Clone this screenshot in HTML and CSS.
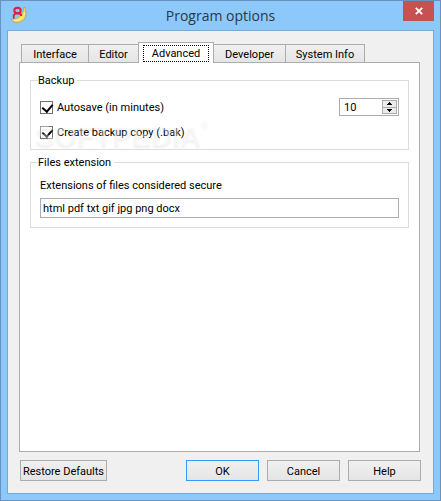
FILE: index.html
```html
<!DOCTYPE html>
<html lang="en">
<head>
<meta charset="utf-8">
<meta name="viewport" content="width=device-width, initial-scale=1">
<title>Program options</title>
<link rel="stylesheet" href="styles.css">
</head>
<body>
<div class="window">
	<header class="titlebar">
		<svg class="app-icon" width="18" height="18" viewBox="0 0 18 18">
			<path d="M1 13C6 13.500 11 11 13.500 4.500L13.600 1.500L15 1.500L15.500 4.500C17.500 10 14 16 8 16.400C4.500 16.600 2 15.500 1 13Z" fill="#f3dc5a" stroke="#a99245" stroke-width=".6"/>
			<ellipse cx="7.500" cy="4.500" rx="3.200" ry="2.700" fill="#8cc8fa" stroke="#dc1f3c" stroke-width="2"/>
			<path d="M4 12.500C2.500 9.500 4.500 7.300 7.500 7.300C10 7.300 11.500 8.300 11.300 10" fill="none" stroke="#dc1f3c" stroke-width="2"/>
			<path d="M4 14.500C9 15 13.500 12 14.700 7" fill="none" stroke="#fff2a0" stroke-width="1"/>
		</svg>
		<h1>Program options</h1>
		<button class="close" type="button" aria-label="Close">
			<svg width="8" height="8" viewBox="0 0 8 8"><path d="M.8 .8L7.200 7.200M7.200 .8L.8 7.200" stroke="#fff" stroke-width="1.800"/></svg>
		</button>
	</header>

	<form class="content">
		<div class="tabs" role="tablist">
			<button type="button" class="tab interface" role="tab">Interface</button>
			<button type="button" class="tab editor" role="tab">Editor</button>
			<button type="button" class="tab active" role="tab" aria-selected="true"><span>Advanced</span></button>
			<button type="button" class="tab developer" role="tab">Developer</button>
			<button type="button" class="tab system" role="tab">System Info</button>
		</div>

		<div class="panel" role="tabpanel">
			<fieldset class="backup">
				<legend>Backup</legend>
				<div class="row">
					<label class="check"><input type="checkbox" checked>Autosave (in minutes)</label>
					<div class="spin">
						<input type="text" value="10" aria-label="Minutes">
						<div class="arrows">
							<button type="button" aria-label="Up"><svg width="5" height="3" viewBox="0 0 5 3"><path d="M2 0h1v1h1v1h1v1H0V2h1V1h1z"/></svg></button>
							<button type="button" aria-label="Down"><svg width="5" height="3" viewBox="0 0 5 3"><path d="M0 0h5v1H4v1H3v1H2V2H1V1H0z"/></svg></button>
						</div>
					</div>
				</div>
				<div class="row">
					<label class="check"><input type="checkbox" checked>Create backup copy (.bak)</label>
				</div>
				<div class="watermark" aria-hidden="true">SOFTPEDIA<sup>®</sup></div>
			</fieldset>

			<fieldset class="files">
				<legend>Files extension</legend>
				<label for="extensions">Extensions of files considered secure</label>
				<input id="extensions" class="text" type="text" value="html pdf txt gif jpg png docx">
			</fieldset>
		</div>

		<footer class="buttons">
			<button type="button" class="restore">Restore Defaults</button>
			<button type="button" class="default">OK</button>
			<button type="button">Cancel</button>
			<button type="button">Help</button>
		</footer>
	</form>
</div>
</body>
</html>
```
FILE: styles.css
```css
* {
	box-sizing: border-box;
}

body {
	margin: 0;
	font-family: Tahoma, Roboto, sans-serif;
	font-size: 11px;
	line-height: 15px;
	color: #000;
}

button, input {
	font: inherit;
	color: inherit;
	margin: 0;
	padding: 0;
	border-radius: 0;
}

button {
	white-space: nowrap;
}

svg {
	display: block;
}

.window {
	display: flex;
	flex-direction: column;
	min-height: 100vh;
	padding: 0 6px 6px;
	border: 1px solid #6893bd;
	background: #8cc8fa;
}

.titlebar {
	display: grid;
	grid-template-columns: 31px 1fr 31px;
	align-items: start;
	height: 29px;
}

.app-icon {
	margin: 5px 0 0 3px;
}

h1 {
	margin: 0;
	font-family: "Open Sans", sans-serif;
	font-size: 14px;
	font-weight: normal;
	line-height: 30px;
	text-align: center;
	color: #26394a;
}

.close {
	display: flex;
	align-items: center;
	justify-content: center;
	height: 20px;
	border: none;
	background: #c75050;
}

.content {
	flex: 1;
	display: flex;
	flex-direction: column;
	padding: 11px 13px 12px 11px;
	border: 1px solid #78a8d4;
	background: #f0f0f0;
}

.tabs {
	display: flex;
	align-items: flex-end;
	height: 21px;
	padding-left: 2px;
	margin-bottom: -1px;
}

.tab {
	height: 19px;
	padding-top: 2px;
	margin-right: -1px;
	border: 1px solid #acacac;
	background: linear-gradient(#f0f0f0, #e5e5e5);
}

.interface {
	width: 68px;
}

.editor {
	width: 51px;
}

.developer {
	width: 73px;
}

.system {
	width: 80px;
}

.active {
	z-index: 1;
	width: 76px;
	height: 21px;
	padding: 1px 4px;
	border-bottom: none;
	background: #fff;
}

.active span {
	display: block;
	border: 1px dotted #000;
}

.panel {
	flex: 1;
	padding: 10px;
	border: 1px solid #acacac;
	background: #fff;
}

fieldset {
	position: relative;
	min-width: 0;
	margin: 0 0 5px;
	padding: 0 9px;
	border: 1px solid #dcdcdc;
}

legend {
	padding: 0 3px 0 0;
	margin-left: -2px;
}

.backup {
	height: 77px;
}

.files {
	height: 73px;
}

.row {
	display: flex;
	justify-content: space-between;
	align-items: center;
	height: 18px;
	margin: 10px 0 7px;
}

.row + .row {
	margin: 0;
}

.check {
	display: flex;
	align-items: center;
	gap: 4px;
}

.check input {
	appearance: none;
	width: 13px;
	height: 13px;
	border: 1px solid #707070;
	background: #fff;
}

.check input:checked::after {
	content: "";
	display: block;
	width: 5px;
	height: 8px;
	margin-left: 3px;
	border: solid #000;
	border-width: 0 2px 2px 0;
	transform: rotate(40deg);
}

.spin {
	display: flex;
	width: 60px;
	height: 18px;
	padding: 1px;
	border: 1px solid #abadb3;
	background: #fff;
}

.spin input {
	flex: 1;
	min-width: 0;
	padding-left: 3px;
	border: none;
}

.arrows {
	display: flex;
	flex-direction: column;
	width: 15px;
}

.arrows button {
	flex: 1;
	display: flex;
	align-items: center;
	justify-content: center;
	border: 1px solid #acacac;
	background: #ebebeb;
}

.arrows button + button {
	border-top: none;
}

.watermark {
	position: absolute;
	left: 4px;
	bottom: -3px;
	font-family: "Liberation Sans", Arial, sans-serif;
	font-size: 29px;
	font-weight: bold;
	line-height: 32px;
	color: rgba(255, 255, 255, .4);
	text-shadow: 0 2px 2px rgba(0, 0, 0, .06);
	pointer-events: none;
}

.watermark sup {
	font-size: 10px;
	line-height: 10px;
	vertical-align: top;
}

.files label {
	display: block;
	margin: 8px 0 5px;
}

.text {
	display: block;
	width: 100%;
	height: 20px;
	padding: 1px 2px 0;
	border: 1px solid #abadb3;
	background: #fff;
}

.buttons {
	display: flex;
	gap: 8px;
	margin: 8px -1px 0 1px;
}

.buttons button {
	width: 73px;
	height: 21px;
	padding-top: 1px;
	border: 1px solid #acacac;
	background: linear-gradient(#f0f0f0, #e5e5e5);
}

.buttons .restore {
	width: 87px;
	margin-right: auto;
}

.buttons .default {
	border-color: #3399ff;
}
```
